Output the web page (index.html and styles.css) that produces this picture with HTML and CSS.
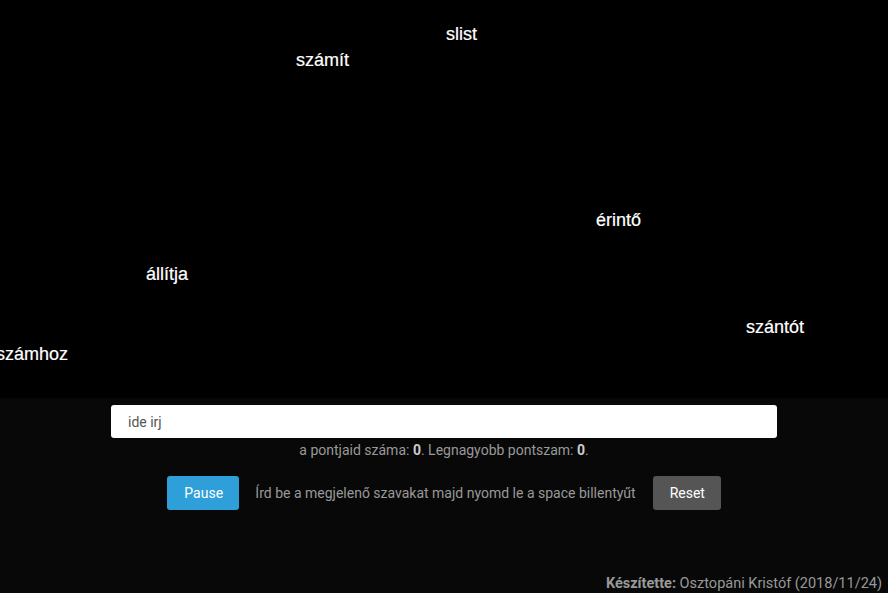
FILE: index.html
```html
<!DOCTYPE html>
<html lang="hu">
<head>
<meta charset="utf-8">
<title>Gépírás</title>
<link rel="stylesheet" href="styles.css">
</head>
<body>
<div class="stage">
  <div class="word" style="left:446px;top:25px">slist</div>
  <div class="word" style="left:296px;top:51px">számít</div>
  <div class="word" style="left:596px;top:211px">érintő</div>
  <div class="word" style="left:146px;top:265px">állítja</div>
  <div class="word" style="left:746px;top:318px">szántót</div>
  <div class="word" style="left:-4px;top:345px">számhoz</div>
</div>
<div class="panel">
  <input class="entry" type="text" placeholder="ide irj">
  <p class="score">a pontjaid száma: <b>0</b>. Legnagyobb pontszam: <b>0</b>.</p>
  <div class="controls">
    <button class="btn btn-pause">Pause</button>
    <span class="hint">Írd be a megjelenő szavakat majd nyomd le a space billentyűt</span>
    <button class="btn btn-reset">Reset</button>
  </div>
</div>
<footer class="credit"><b>Készítette:</b> Osztopáni Kristóf (2018/11/24)</footer>
</body>
</html>
```
FILE: styles.css
```css
* { box-sizing: border-box; }
html, body {
  margin: 0;
  padding: 0;
  height: 100%;
}
body {
  background: #080808;
  font-family: Roboto, "Liberation Sans", sans-serif;
  color: #999;
  overflow: hidden;
  position: relative;
}
.stage {
  position: relative;
  width: 888px;
  height: 398px;
  background: #000;
  overflow: hidden;
}
.word {
  position: absolute;
  font-family: "Liberation Sans", Arial, sans-serif;
  font-size: 18px;
  line-height: 18px;
  color: #fff;
  white-space: nowrap;
  -webkit-text-stroke: 0.2px #fff;
}
.panel {
  display: flex;
  flex-direction: column;
  align-items: center;
  padding-top: 7px;
}
.entry {
  width: 666px;
  height: 33px;
  border: 0;
  border-radius: 3px;
  background: #fff;
  padding: 0 17px;
  font-family: Roboto, sans-serif;
  font-size: 14px;
  color: #333;
  outline: none;
}
.entry::placeholder { color: #555; }
.score {
  margin: 4px 0 0;
  font-size: 14px;
  line-height: 16px;
  color: #999;
}
.score b { color: #ccc; font-weight: 700; }
.controls {
  display: flex;
  align-items: center;
  gap: 16px;
  margin-top: 18px;
}
.btn {
  height: 34px;
  border: 0;
  border-radius: 3px;
  color: #fff;
  font-family: Roboto, sans-serif;
  font-size: 14px;
  padding: 0 17px;
  cursor: pointer;
}
.btn-pause { background: #2e9fd8; width: 72px; }
.btn-reset { background: #555; width: 68px; margin-left: 1px; }
.hint { font-size: 14px; color: #999; }
.credit {
  position: absolute;
  right: 6px;
  bottom: 1px;
  font-size: 14.5px;
  color: #999;
}
.credit b { font-weight: 700; }
```
